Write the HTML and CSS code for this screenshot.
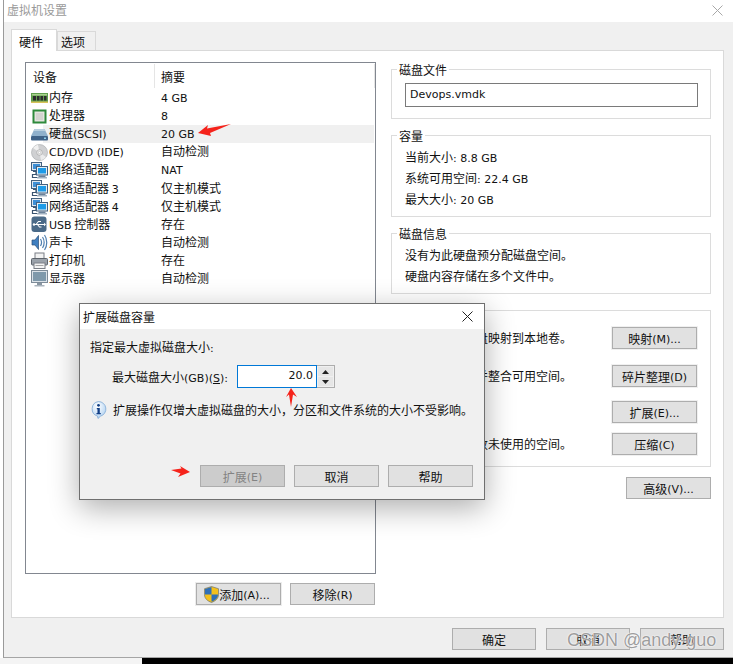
FILE: index.html
```html
<!DOCTYPE html>
<html lang="zh-CN">
<head>
<meta charset="utf-8">
<title>虚拟机设置</title>
<link rel="stylesheet" href="styles.css">
</head>
<body>
<svg class="defs" width="0" height="0" aria-hidden="true">
  <defs>
    <symbol id="i-net" viewBox="0 0 17 17">
      <rect x="0.5" y="0.5" width="10" height="8" fill="#dfe8f0" stroke="#44617f"/>
      <rect x="2" y="2" width="7" height="5" fill="#3d8fd6"/>
      <path d="M2 9.5h3v3H1.5v3h5" fill="none" stroke="#3a5470" stroke-width="1.2"/>
      <rect x="5.5" y="4.5" width="11" height="8.5" fill="#e4edf4" stroke="#44617f"/>
      <rect x="7" y="6" width="8" height="5.5" fill="#1e9be8"/>
      <rect x="7.5" y="13.5" width="7" height="1.5" fill="#6b8199"/>
      <rect x="6" y="15" width="10" height="1.5" fill="#9fb0c0"/>
    </symbol>
  </defs>
</svg>
<div class="window">
  <header class="titlebar">
    <span class="title">虚拟机设置</span>
    <svg class="win-close" width="11" height="11" viewBox="0 0 11 11"><path d="M.5.5l10 10M10.5.5l-10 10" stroke="#a8a8a8" fill="none"/></svg>
  </header>
  <div class="tabs">
    <div class="tab tab-active">硬件</div>
    <div class="tab">选项</div>
  </div>
  <main class="panel">
    <section class="left">
      <div class="list">
        <div class="list-head">
          <div class="col-name head-cell">设备</div>
          <div class="head-cell head-sum">摘要</div>
        </div>
        <div class="row">
          <svg class="icon" viewBox="0 0 17 17"><rect x="0" y="3" width="17" height="10" fill="#5f9e4c"/><rect x="1" y="4" width="15" height="1.5" fill="#a9d18e"/><rect x="2" y="6" width="3" height="4.5" fill="#2d2d2d"/><rect x="6" y="6" width="2.5" height="4.5" fill="#2d2d2d"/><rect x="9.5" y="6" width="2.5" height="4.5" fill="#2d2d2d"/><rect x="13" y="6" width="2.5" height="4.5" fill="#2d2d2d"/><rect x="0" y="11.5" width="17" height="1.5" fill="#d8c25a"/></svg>
          <span class="name">内存</span><span class="sum la">4 GB</span>
        </div>
        <div class="row">
          <svg class="icon" viewBox="0 0 17 17"><rect x="2.5" y="2.5" width="12" height="12" fill="#e4e4df" stroke="#2f8a3c" stroke-width="2"/><rect x="5" y="5" width="7" height="7" fill="#d4d4d0"/></svg>
          <span class="name">处理器</span><span class="sum la">8</span>
        </div>
        <div class="row row-selected">
          <svg class="icon" viewBox="0 0 17 17"><path d="M3.5 3h10L17 10H0z" fill="#8fb0cc"/><path d="M3.5 3h10l1 2H2.500z" fill="#b9cfe0"/><rect x="0" y="10" width="17" height="4.500" rx="1" fill="#3f6288"/><rect x="13" y="11.500" width="2" height="1.500" fill="#8fd0ee"/></svg>
          <span class="name">硬盘<span class="la">(SCSI)</span></span><span class="sum la">20 GB</span>
        </div>
        <div class="row">
          <svg class="icon" viewBox="0 0 17 17"><circle cx="8.500" cy="8.500" r="8" fill="#cfd0d2" stroke="#a5a7aa" stroke-width=".6"/><path d="M8.500 8.500L2 4a8 8 0 0 1 5-3.300z" fill="#f1f1f1"/><path d="M8.500 8.500L15 13a8 8 0 0 1-5 3.300z" fill="#ececec"/><circle cx="8.500" cy="8.500" r="2.800" fill="#eee" stroke="#9a9a9a" stroke-width=".6"/><circle cx="8.500" cy="8.500" r="1.200" fill="#fff" stroke="#a5a5a5" stroke-width=".5"/></svg>
          <span class="name la">CD/DVD (IDE)</span><span class="sum">自动检测</span>
        </div>
        <div class="row"><svg class="icon"><use href="#i-net"/></svg><span class="name">网络适配器</span><span class="sum la">NAT</span></div>
        <div class="row"><svg class="icon"><use href="#i-net"/></svg><span class="name">网络适配器 <span class="la">3</span></span><span class="sum">仅主机模式</span></div>
        <div class="row"><svg class="icon"><use href="#i-net"/></svg><span class="name">网络适配器 <span class="la">4</span></span><span class="sum">仅主机模式</span></div>
        <div class="row">
          <svg class="icon" viewBox="0 0 17 17"><rect x=".5" y=".5" width="15" height="15.500" rx="3" fill="#4a6a88"/><path d="M2.500 8.500h10.500M5 8.500l2.500-3h2.500M6.500 8.500l2 2.500h2" stroke="#fff" fill="none" stroke-width="1.100"/><path d="M13 6.800l2 1.700-2 1.700z" fill="#fff"/><circle cx="3" cy="8.500" r="1.200" fill="#fff"/></svg>
          <span class="name"><span class="la">USB</span> 控制器</span><span class="sum">存在</span>
        </div>
        <div class="row">
          <svg class="icon" viewBox="0 0 17 17"><path d="M1 6h3l3.500-4.500v14L4 11H1z" fill="#3f7fc0" stroke="#2a4f7a" stroke-width=".7"/><path d="M9.500 5c1.200 2 1.200 5 0 7M11.500 3c2.200 3 2.200 8 0 11M13.500 1c3 4 3 11 0 15" fill="none" stroke="#4f7fb0" stroke-width="1.200"/></svg>
          <span class="name">声卡</span><span class="sum">自动检测</span>
        </div>
        <div class="row">
          <svg class="icon" viewBox="0 0 17 17"><rect x="4" y="1" width="9" height="5.500" fill="#f2f2f2" stroke="#7b7f86"/><rect x=".5" y="6.500" width="16" height="6.500" rx="1" fill="#9ca3ab" stroke="#5e646c"/><rect x="3" y="11" width="11" height="5.500" fill="#f4f4f4" stroke="#7b7f86"/><rect x="4.500" y="13" width="8" height="1" fill="#a5a5a5"/></svg>
          <span class="name">打印机</span><span class="sum">存在</span>
        </div>
        <div class="row">
          <svg class="icon" viewBox="0 0 17 17"><rect x=".5" y=".5" width="16" height="12" fill="#dbe2e8" stroke="#7d8b98"/><rect x="2" y="2" width="13" height="9" fill="#7f99ab"/><rect x="6" y="13" width="5" height="2" fill="#8895a1"/><rect x="3.500" y="15" width="10" height="1.500" fill="#aab4bd"/></svg>
          <span class="name">显示器</span><span class="sum">自动检测</span>
        </div>
      </div>
      <div class="list-actions">
        <button class="btn btn-add">
          <svg class="shield" width="15" height="17" viewBox="0 0 15 17"><path d="M7.500.5l7 2.200v6c0 3.800-3 6.300-7 7.800-4-1.500-7-4-7-7.800v-6z" fill="#f3c01c" stroke="#5a6570" stroke-width=".6"/><path d="M7.500 1v7.500H1V3z" fill="#2f6fb7"/><path d="M7.500 8.500H14c0 3.500-2.800 5.800-6.500 7.300z" fill="#2f6fb7"/></svg>添加<span class="la">(A)...</span>
        </button>
        <button class="btn">移除<span class="la">(R)</span></button>
      </div>
    </section>
    <section class="right">
      <fieldset class="group group-file">
        <legend>磁盘文件</legend>
        <div class="file-input la">Devops.vmdk</div>
      </fieldset>
      <fieldset class="group group-size">
        <legend>容量</legend>
        <p>当前大小<span class="la">: 8.8 GB</span></p>
        <p>系统可用空间<span class="la">: 22.4 GB</span></p>
        <p>最大大小<span class="la">: 20 GB</span></p>
      </fieldset>
      <fieldset class="group group-info">
        <legend>磁盘信息</legend>
        <p>没有为此硬盘预分配磁盘空间<span class="tc">。</span></p>
        <p>硬盘内容存储在多个文件中<span class="tc">。</span></p>
      </fieldset>
      <div class="utilities">
        <div class="util util-map"><span>将此虚拟机磁盘映射到本地卷<span class="tc">。</span></span><button class="btn btn-halo">映射<span class="la">(M)...</span></button></div>
        <div class="util util-defrag"><span>整理文件碎片并整合可用空间<span class="tc">。</span></span><button class="btn btn-halo">碎片整理<span class="la">(D)</span></button></div>
        <div class="util util-expand"><span>扩展磁盘容量<span class="tc">。</span></span><button class="btn btn-halo">扩展<span class="la">(E)...</span></button></div>
        <div class="util util-compact"><span>压缩磁盘以回收未使用的空间<span class="tc">。</span></span><button class="btn btn-halo">压缩<span class="la">(C)</span></button></div>
      </div>
      <div class="advanced"><button class="btn">高级<span class="la">(V)...</span></button></div>
    </section>
  </main>
  <footer class="footer">
    <button class="btn">确定</button>
    <button class="btn">取消</button>
    <button class="btn">帮助</button>
  </footer>
</div>
<div class="bottom-strip"><div class="strip-light"></div><div class="strip-dark"></div></div>

<div class="dialog">
  <div class="dlg-title">
    <span>扩展磁盘容量</span>
    <svg width="11" height="11" viewBox="0 0 11 11"><path d="M.5.5l10 10M10.500.5l-10 10" stroke="#222" fill="none"/></svg>
  </div>
  <div class="dlg-body">
    <p class="dlg-prompt">指定最大虚拟磁盘大小<span class="la">:</span></p>
    <div class="dlg-field">
      <label>最大磁盘大小<span class="la">(GB)(<u>S</u>):</span></label>
      <div class="spin-input la">20.0</div>
      <div class="spin">
        <div class="spin-btn"><svg width="7" height="4" viewBox="0 0 7 4"><path d="M3.500 0L7 4H0z" fill="#222"/></svg></div>
        <div class="spin-btn"><svg width="7" height="4" viewBox="0 0 7 4"><path d="M3.500 4L7 0H0z" fill="#222"/></svg></div>
      </div>
    </div>
    <div class="dlg-note">
      <svg width="17" height="18" viewBox="0 0 17 18"><defs><radialGradient id="bubble" cx=".4" cy=".3" r=".8"><stop offset="0" stop-color="#fff"/><stop offset="1" stop-color="#a9cdf0"/></radialGradient></defs><path d="M8.500.5a7.500 7.500 0 0 1 2 14.700L8 17.500l-.5-2.400A7.500 7.500 0 0 1 8.500.5z" fill="url(#bubble)" stroke="#7fa9d6" stroke-width=".8"/><circle cx="8.500" cy="4.300" r="1.400" fill="#123f86"/><path d="M6.800 7h3v5h1v1.200H6.500V12h1V8.200h-.7z" fill="#123f86"/></svg>
      <span>扩展操作仅增大虚拟磁盘的大小，分区和文件系统的大小不受影响<span class="tc">。</span></span>
    </div>
    <div class="dlg-actions">
      <button class="btn btn-disabled">扩展<span class="la">(E)</span></button>
      <button class="btn">取消</button>
      <button class="btn">帮助</button>
    </div>
  </div>
</div>

<svg class="arrows" width="733" height="664" viewBox="0 0 733 664" aria-hidden="true">
  <polygon points="198,133 208,125 207,128.500 231,124 210,133 211,136" fill="#f5231b"/>
  <polygon points="291,388 286,397 289,394.500 291,407 293,394.500 297,397" fill="#f5231b"/>
  <polygon points="190,472 180,466 181.500,468.500 171,470 180.500,473.500 178,477" fill="#f5231b"/>
</svg>
<div class="watermark">CSDN @andy-guo</div>
</body>
</html>
```
FILE: styles.css
```css
* { box-sizing: border-box; }
html, body { margin: 0; padding: 0; }
body {
  width: 733px;
  height: 664px;
  overflow: hidden;
  position: relative;
  background: #fff;
  font: 12px/16px "Noto Sans CJK SC", "Noto Sans", sans-serif;
  color: #111;
}
p { margin: 0; }
.defs { position: absolute; }
.la { font-family: "DejaVu Sans", sans-serif; font-size: 11px; line-height: 1; }
.tc { font-family: "Noto Sans CJK TC", sans-serif; line-height: 0; }

.window {
  margin-left: 3px;
  height: 658px;
  border-left: 1px solid #9a9a9a;
  border-bottom: 1px solid #a5a5a5;
  background: #f0f0f0;
  display: flex;
  flex-direction: column;
}
.titlebar {
  height: 22px;
  flex: none;
  background: #fff;
  display: flex;
  align-items: center;
  justify-content: space-between;
  padding: 0 10px 2px 3px;
}
.title { color: #9a9a9a; font-size: 12px; }

.tabs {
  flex: none;
  height: 28px;
  display: flex;
  align-items: flex-end;
  padding-left: 7px;
  position: relative;
  z-index: 1;
}
.tab {
  width: 39px;
  height: 19px;
  padding-left: 3px;
  line-height: 19px;
  border: 1px solid #d9d9d9;
  border-bottom: none;
  background: #f0f0f0;
}
.tab-active {
  width: 46px;
  height: 22px;
  padding-left: 7px;
  line-height: 24px;
  background: #fff;
  margin-bottom: -1px;
}

.panel {
  flex: none;
  width: 713px;
  height: 568px;
  margin-left: 7px;
  background: #fff;
  border: 1px solid #d9d9d9;
  padding: 11px 12px 0 13px;
  display: flex;
  gap: 15px;
}
.left { width: 351px; flex: none; }
.list {
  height: 512px;
  border: 1px solid #828790;
  background: #fff;
  padding-top: 1px;
}
.list-head { display: flex; height: 25px; }
.head-cell { padding: 5px 0 0 6px; }
.col-name { width: 129px; padding-left: 7px; border-right: 1px solid #e5e5e5; height: 24px; }
.head-sum { flex: 1; border-right: 1px solid #e5e5e5; height: 24px; }
.row {
  height: 18.1px;
  display: flex;
  align-items: center;
  padding-left: 5px;
  line-height: 18px;
}
.row-selected { background: linear-gradient(90deg, #fff 17px, #f0f0f0 17px); margin-right: 1px; }
.icon { width: 17px; height: 17px; flex: none; margin-right: 1px; }
.name { width: 112px; flex: none; white-space: nowrap; padding-bottom: 2px; }
.sum { white-space: nowrap; padding-bottom: 2px; }
.name.la, .sum.la { padding-bottom: 0; }

.list-actions {
  display: flex;
  justify-content: flex-end;
  gap: 9px;
  margin-top: 9px;
  margin-right: 1px;
}
.btn {
  width: 85px;
  height: 22px;
  padding: 2px 0 0;
  border: 1px solid #adadad;
  background: #e1e1e1;
  color: #111;
  font: inherit;
  display: inline-flex;
  align-items: center;
  justify-content: center;
  flex: none;
}
.btn-add { outline: 1px solid #ececec; }
.shield { margin-left: -3px; margin-top: -2px; }
.btn-halo { box-shadow: 0 0 0 1px #f0f0f0; }
.btn-disabled { background: #ccc; color: #838383; }

.right { width: 320px; flex: none; }
.group {
  margin: 0 0 7px;
  padding: 0;
  border: 1px solid #dcdcdc;
  min-width: 0;
}
.group legend {
  margin-left: 5px;
  padding: 2px 2px 0;
  line-height: 16px;
}
.group-file { height: 59px; margin-top: -2px; padding-top: 5px; }
.file-input {
  height: 24px;
  margin: 0 12px 0 13px;
  border: 1px solid #7a7a7a;
  padding: 5px 0 0 4px;
  background: #fff;
}
.group-size { height: 91px; padding-top: 2px; }
.group-info { height: 70px; padding-top: 2px; }
.group p { line-height: 21px; white-space: nowrap; padding-left: 13px; }
.utilities {
  height: 157px;
  border: 1px solid #dcdcdc;
  margin-top: 16px;
  padding: 16px 13px 0 12px;
}
.util { display: flex; align-items: center; justify-content: space-between; }
.util-defrag { margin-top: 16px; }
.util-expand { margin-top: 14px; }
.util-compact { margin-top: 10px; }
.advanced { display: flex; justify-content: flex-end; margin-top: 10px; }

.footer {
  flex: 1;
  display: flex;
  justify-content: flex-end;
  gap: 10px;
  padding: 10px 9px 0 0;
  align-items: flex-start;
}
.footer .btn { width: 84px; }

.bottom-strip { display: flex; height: 6px; }
.strip-light { width: 142px; background: #f4f4f4; }
.strip-dark { flex: 1; background: #000; }

.dialog {
  position: absolute;
  left: 79px;
  top: 303px;
  width: 406px;
  height: 197px;
  border: 1px solid #6f6f6f;
  background: #f0f0f0;
  box-shadow: 0 8px 28px rgba(0, 0, 0, .32);
  display: flex;
  flex-direction: column;
}
.dlg-title {
  flex: none;
  height: 25px;
  background: #fff;
  display: flex;
  align-items: center;
  justify-content: space-between;
  padding: 0 11px 0 3px;
}
.dlg-body { flex: 1; padding: 10px 11px 0 10px; display: flex; flex-direction: column; }
.dlg-prompt { line-height: 16px; }
.dlg-field { display: flex; align-items: stretch; margin-top: 10px; padding-left: 22px; height: 23px; }
.dlg-field label { width: 125px; line-height: 24px; white-space: nowrap; }
.spin-input {
  width: 80px;
  border: 1px solid #0078d7;
  background: #fff;
  text-align: right;
  padding: 4px 3px 0 0;
}
.spin {
  width: 18px;
  border: 1px solid #adadad;
  border-left: none;
  display: flex;
  flex-direction: column;
  gap: 1px;
  padding: 1px;
  background: #f0f0f0;
}
.spin-btn { flex: 1; background: #e6e6e6; display: flex; align-items: center; justify-content: center; }
.dlg-note { display: flex; align-items: flex-start; gap: 6px; margin-top: 13px; white-space: nowrap; line-height: 18px; }
.dlg-actions { display: flex; justify-content: flex-end; gap: 9px; margin-top: 46px; }

.arrows { position: absolute; left: 0; top: 0; pointer-events: none; }
.watermark {
  position: absolute;
  left: 567px;
  top: 630px;
  font: 18px/20px "Liberation Sans", sans-serif;
  color: rgba(140, 140, 140, .85);
  text-shadow: 0 0 2px #fff, 0 0 1px #fff;
  white-space: nowrap;
}
```
